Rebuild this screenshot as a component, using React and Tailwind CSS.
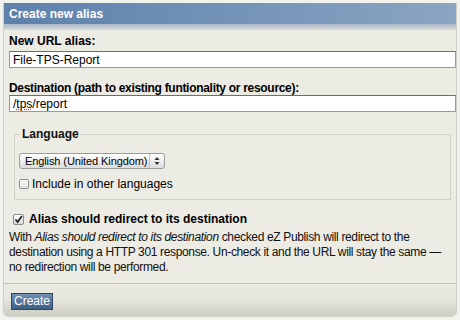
import React from "react";

export default function App() {
  return (
    <div className="w-[460px] h-[320px] bg-[#f3f3ee] pt-[3px] px-[3px] overflow-hidden" style={{ fontFamily: '"Liberation Sans", Arial, sans-serif' }}>
      <div className="w-[454px] h-[313px] flex flex-col bg-[#ecebe4] border-l border-r border-[#cfcec6] rounded-b-[6px] overflow-hidden shadow-[0_1px_1px_rgba(0,0,0,0.15)]">
        <div className="h-[21px] shrink-0 bg-gradient-to-r from-[#5d81ab] via-[#7393b8] to-[#8ba5c2] flex items-center px-[5px] text-white font-bold text-[12px]">
          Create new alias
        </div>
        <div className="h-[6px] shrink-0 bg-gradient-to-b from-[#aab8c6] to-[#d8dbda]"></div>
        <div className="px-[5px] flex flex-col">
          <div className="font-bold text-[12px] text-black mt-[4px] leading-[14px]">New URL alias:</div>
          <div className="mt-[3px] h-[17px] w-[447px] bg-white border border-[#9a9a9a] border-t-[#6d6d6d] flex items-center px-[3px] text-[12px] text-black">File-TPS-Report</div>
          <div className="font-bold text-[12px] text-black mt-[13px] leading-[14px] tracking-[-0.3px]">Destination (path to existing funtionality or resource):</div>
          <div className="mt-0 h-[17px] w-[447px] bg-white border border-[#9a9a9a] border-t-[#6d6d6d] flex items-center px-[3px] text-[12px] text-black">
            /<span className="underline decoration-dotted decoration-red-500">tps</span>/report
          </div>
          <fieldset className="mt-[13px] ml-[5px] w-[437px] border border-[#d2d1c9] h-[75px] px-[4px] pb-[4px]">
            <legend className="font-bold text-[12px] text-[#111] px-[2px] ml-[1px]">Language</legend>
            <div className="mt-[10px] h-[16px] w-[146px] rounded-[3px] border border-[#9b9b9b] bg-gradient-to-b from-white to-[#dcdcdc] flex items-center pl-[5px] text-[11px] text-black whitespace-nowrap">
              <span className="flex-1 tracking-[-0.1px]">English (United Kingdom)</span>
              <div className="w-[15px] h-full border-l border-[#bdbdbd] flex items-center justify-center">
                <svg width="6" height="10" viewBox="0 0 6 10"><path d="M3 1 L5.5 4 H0.5 Z M3 9 L5.5 6 H0.5 Z" fill="#333" /></svg>
              </div>
            </div>
            <div className="mt-[6px] flex items-center gap-[3px] text-[12px] text-black">
              <span className="w-[10px] h-[10px] border border-[#8d8d8d] rounded-[2px] bg-gradient-to-b from-white to-[#e2e2e2]"></span>
              Include in other languages
            </div>
          </fieldset>
          <div className="mt-[10px] flex items-center gap-[5px] ml-[4px]">
            <span className="w-[11px] h-[11px] border border-[#8d8d8d] rounded-[2px] bg-gradient-to-b from-white to-[#dadada] flex items-center justify-center">
              <svg width="9" height="9" viewBox="0 0 9 9"><path d="M1.5 4.5 L3.6 7 L8 1" stroke="#222" strokeWidth="1.8" fill="none" /></svg>
            </span>
            <span className="font-bold text-[12px] text-black">Alias should redirect to its destination</span>
          </div>
          <div className="mt-[2px] text-[12px] leading-[15px] text-[#111] tracking-[-0.35px] whitespace-nowrap flex flex-col">
            <div className="flex gap-[3px]">
              <span>With</span>
              <i>Alias should redirect to its destination</i>
              <span>checked eZ Publish will redirect to the</span>
            </div>
            <div>destination using a HTTP 301 response. Un-check it and the URL will stay the same —</div>
            <div>no redirection will be performed.</div>
          </div>
        </div>
        <div className="mt-[8px] border-t border-[#c5c4bc]"></div>
        <div className="flex-1 bg-gradient-to-b from-[#ebeae3] via-[#e6e5dd] to-[#cdccc1] px-[7px] pt-[4px]">
          <button className="h-[17px] px-[2px] bg-gradient-to-b from-[#6f8fb3] to-[#3f5f85] border border-[#2e4664] text-white text-[12px] leading-[14px]">Create</button>
        </div>
      </div>
    </div>
  );
}
